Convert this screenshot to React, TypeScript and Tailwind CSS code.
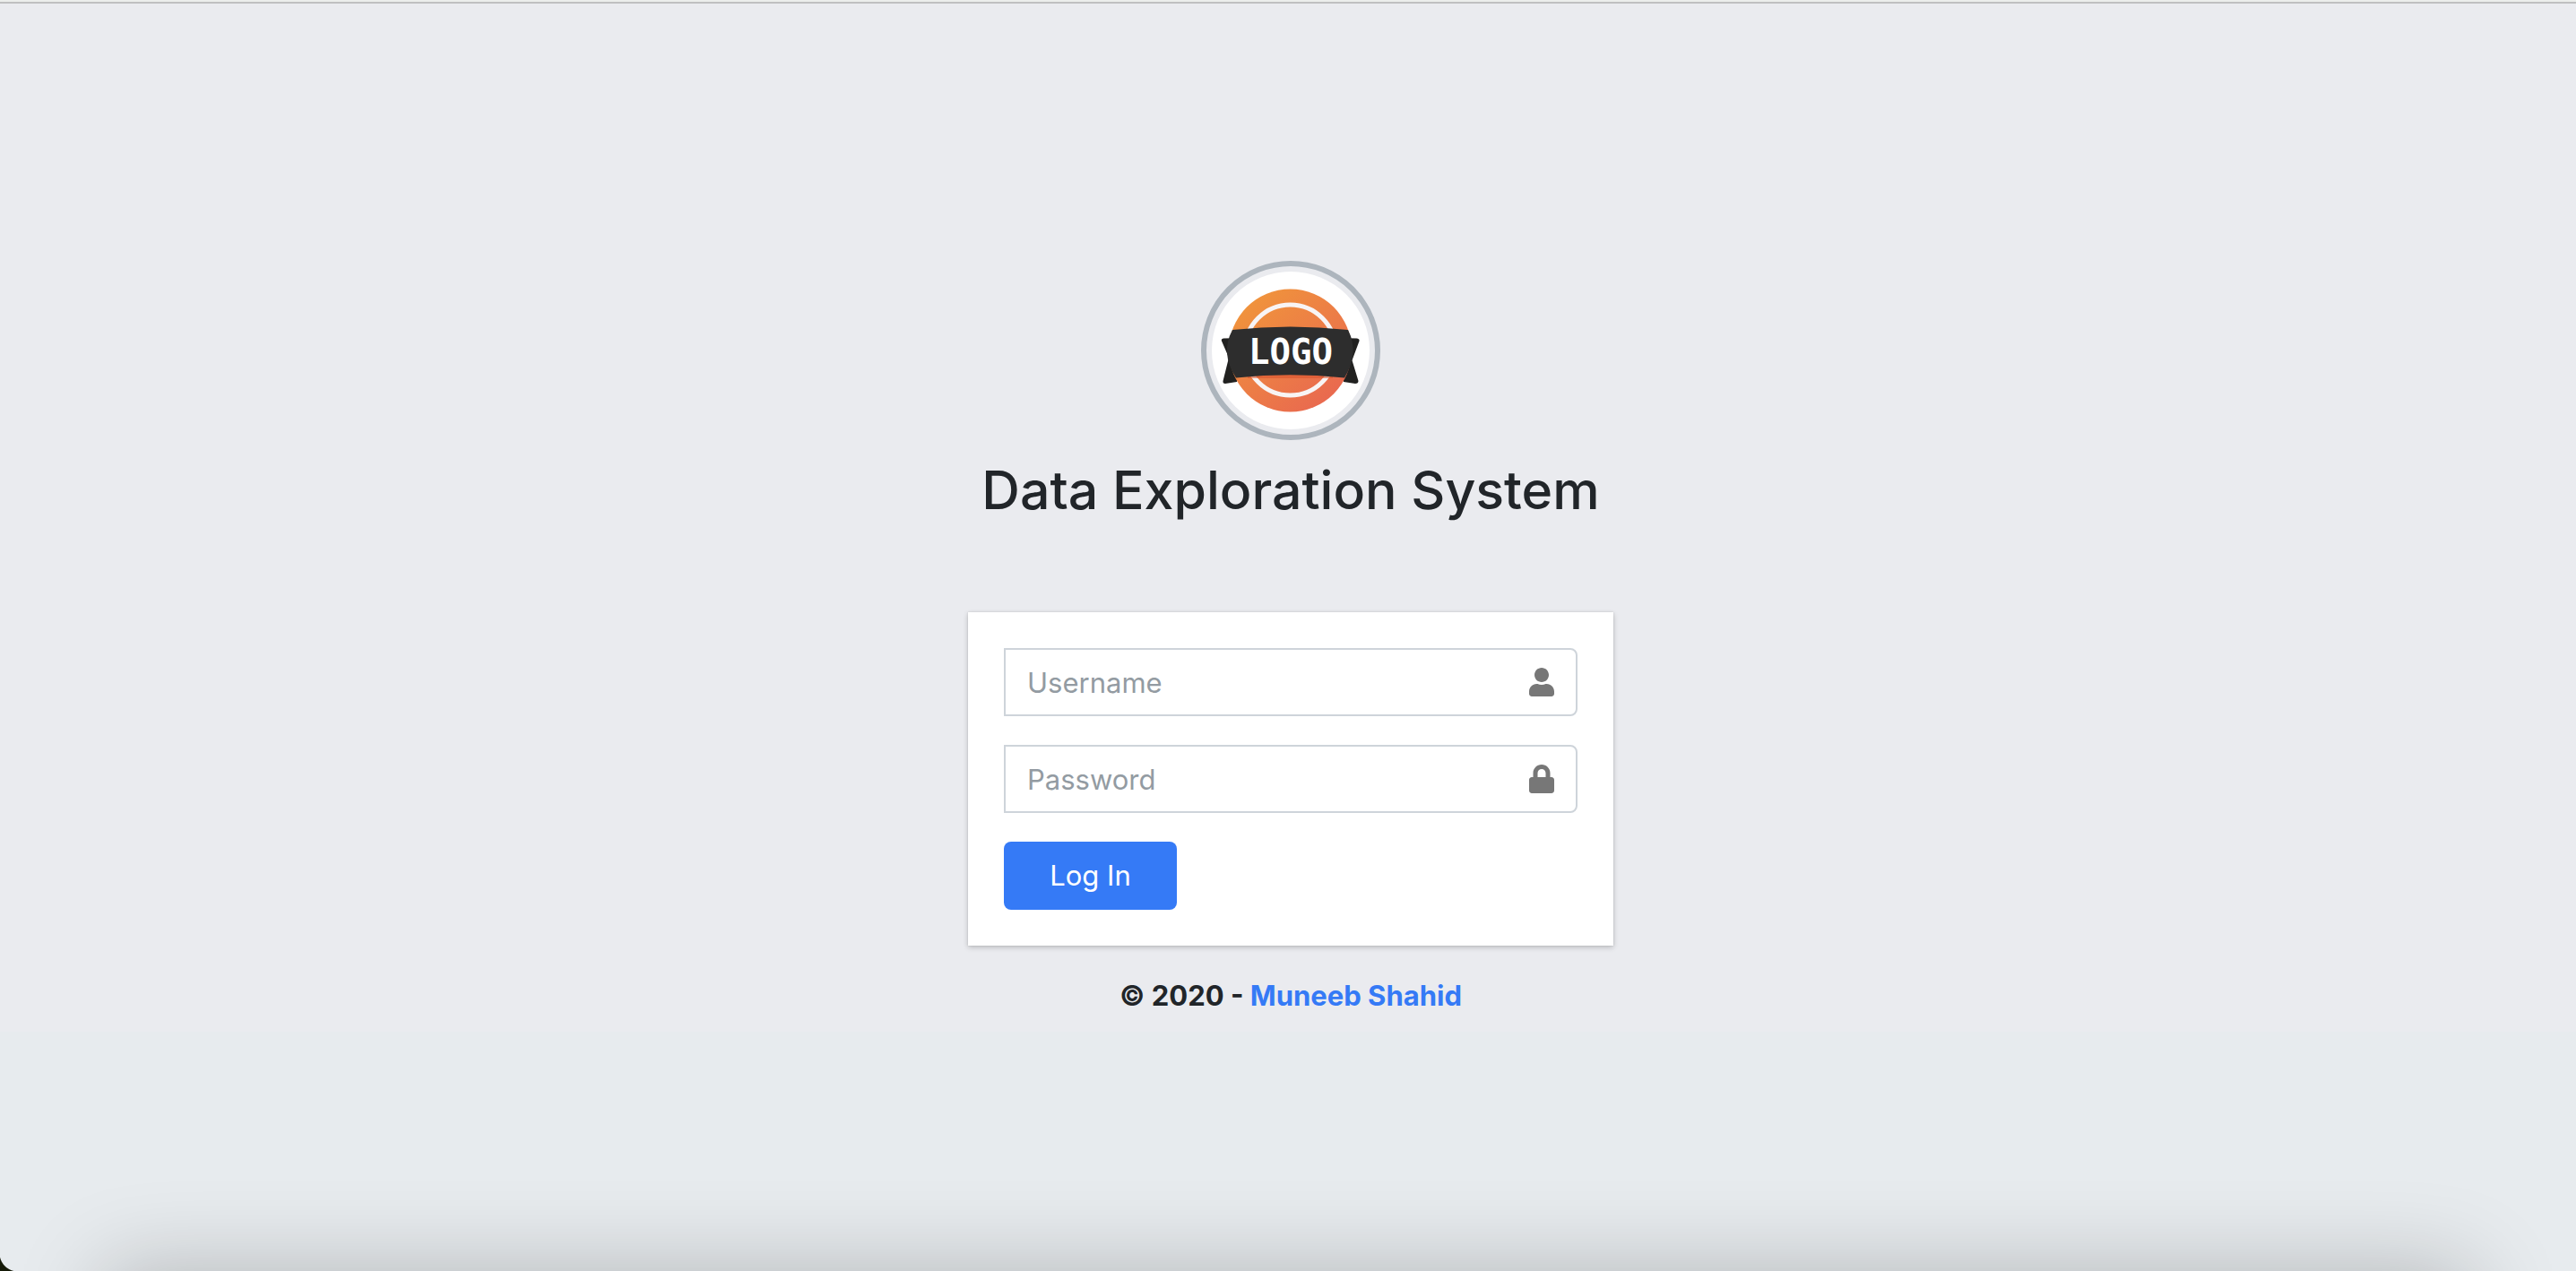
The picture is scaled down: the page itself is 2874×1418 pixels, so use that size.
import React from "react";
import { FaLock, FaUser } from "react-icons/fa";

function Logo() {
  return (
    <svg viewBox="0 0 176 176" className="block h-full w-full" role="img" aria-label="Logo">
      <defs>
        <linearGradient id="disc" gradientUnits="userSpaceOnUse" x1="40" y1="35" x2="135" y2="140">
          <stop offset="0" stopColor="#f0933c" />
          <stop offset="1" stopColor="#e9694f" />
        </linearGradient>
      </defs>
      <rect width="176" height="176" fill="#ffffff" />
      <path d="M13 74.500 Q10 75 11 77.500 L19 96 L12.500 122 Q12 125 15 125 L28 123 L36 74 Z" fill="#212120" />
      <path d="M162 74.500 Q165 75 164.500 77.500 L156.500 99 L163.500 122 Q163.500 125 160 125 L147 123 L139 74 Z" fill="#212120" />
      <circle cx="87.500" cy="88" r="68.500" fill="url(#disc)" />
      <path d="M45 119 A55 55 0 0 0 130 119 Z" fill="#d9552f" opacity="0.3" />
      <circle cx="87.500" cy="87.500" r="50.500" fill="url(#disc)" stroke="#f8f4f4" strokeWidth="5" />
      <path d="M40 113 L135 113 L135 119 L40 119 Z" fill="#d9552f" opacity="0.6" />
      <path d="M23 65 Q87.500 58 152 65 Q165 91 148 118.500 Q87.500 112 27 118.500 Q9 91 23 65 Z" fill="#2d2d2d" />
      <text
        x="88"
        y="103"
        textAnchor="middle"
        fill="#ffffff"
        fontSize="39"
        fontWeight="700"
        fontFamily="'DejaVu Sans Mono', monospace"
      >
        LOGO
      </text>
    </svg>
  );
}

type FieldProps = {
  id: string;
  type: string;
  label: string;
  icon: React.ReactNode;
};

function Field({ id, type, label, icon }: FieldProps) {
  return (
    <div className="flex h-19 items-center rounded-r-lg border-2 border-[#ced4da] bg-white pr-6">
      <input
        id={id}
        name={id}
        type={type}
        placeholder={label}
        aria-label={label}
        className="h-full min-w-0 flex-1 bg-transparent px-6 text-[31px] text-[#495057] outline-none placeholder:text-[#939ba2]"
      />
      <label htmlFor={id} className="text-[#777777]">
        {icon}
      </label>
    </div>
  );
}

export default function App() {
  return (
    <div className="relative flex min-h-screen flex-col overflow-hidden bg-[#e7ebee] font-['Inter',sans-serif] text-[#212529]">
      <div className="h-1 border-b-2 border-[#bfc0c1] bg-[#eceeec]" />
      <main className="flex flex-col items-center bg-[#eaebef] pt-[287px] pb-4 pl-1.5">
        <div className="size-50 rounded-full border-6 border-[#adb5bd] p-1.5">
          <div className="h-full overflow-hidden rounded-full">
            <Logo />
          </div>
        </div>
        <h1 className="mt-4 text-[59px] leading-20 font-medium">Data Exploration System</h1>
        <form
          className="mt-24 flex w-full max-w-[720px] flex-col gap-8 bg-white p-10 shadow-[0_0_2px_rgba(0,0,0,0.13),0_2px_6px_rgba(0,0,0,0.2)]"
          onSubmit={(event) => event.preventDefault()}
        >
          <Field id="username" type="text" label="Username" icon={<FaUser className="h-8 w-7" />} />
          <Field id="password" type="password" label="Password" icon={<FaLock className="h-8 w-7" />} />
          <button type="submit" className="h-19 w-[193px] rounded-lg bg-[#357af6] text-[31px] text-white">
            Log In
          </button>
        </form>
        <p className="mt-8 text-[31px] leading-12 font-bold">
          © 2020 -{" "}
          <a href="#" className="text-[#357af6]">
            Muneeb Shahid
          </a>
        </p>
      </main>
      <div className="absolute inset-x-[116px] -bottom-50 h-50 shadow-[0_0_100px_rgba(0,0,0,0.23)]" />
      <div className="absolute bottom-0 left-0 size-5 bg-[radial-gradient(circle_at_100%_0%,transparent_20px,#151a08_21px)]" />
    </div>
  );
}
